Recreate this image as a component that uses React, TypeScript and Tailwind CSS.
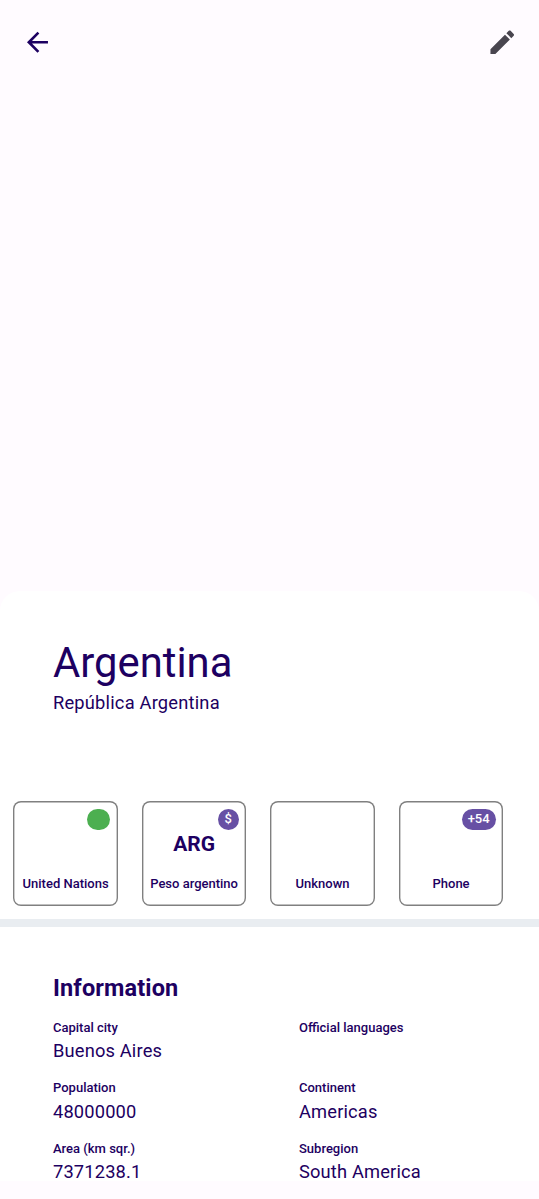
import React from "react";

const cards: { label: string; badge?: string; tone?: string; center?: string }[] = [
  { label: "United Nations", badge: "", tone: "w-[23px] bg-[#4caf50]" },
  { label: "Peso argentino", badge: "$", tone: "w-[21px] bg-[#6750a4]", center: "ARG" },
  { label: "Unknown" },
  { label: "Phone", badge: "+54", tone: "w-[34px] bg-[#6750a4]" },
];

const facts = [
  ["Capital city", "Buenos Aires"],
  ["Official languages", ""],
  ["Population", "48000000"],
  ["Continent", "Americas"],
  ["Area (km sqr.)", "7371238.1"],
  ["Subregion", "South America"],
];

export default function App() {
  return (
    <div className="flex h-[1199px] w-[539px] flex-col overflow-hidden bg-[#fffbff] font-['Roboto',sans-serif] text-[#1d0061]">
      <header className="flex h-[84px] shrink-0 items-center justify-between pr-[21px] pl-[21.6px]">
        <button aria-label="Back">
          <svg width="32" height="32" viewBox="0.2 -0.4 24.4 24.4" fill="currentColor">
            <path d="M20 11H7.83l5.59-5.59L12 4l-8 8 8 8 1.41-1.41L7.83 13H20v-2z" />
          </svg>
        </button>
        <button aria-label="Edit">
          <svg width="32" height="32" viewBox="-0.4 -0.4 24.4 24.4" fill="#49454f">
            <path d="M3 17.25V21h3.75L17.81 9.94l-3.75-3.75L3 17.25zM20.71 7.04c.39-.39.39-1.02 0-1.41l-2.34-2.34c-.39-.39-1.02-.39-1.41 0l-1.83 1.83 3.75 3.75 1.83-1.83z" />
          </svg>
        </button>
      </header>
      <main className="mt-[507px] h-[590px] shrink-0 overflow-hidden rounded-t-[20px] bg-white">
        <section className="flex h-[209.6px] flex-col pt-[46px] pl-[53px]">
          <h1 className="text-[41.8px] leading-[52px]">Argentina</h1>
          <p className="mt-px text-[18.3px] leading-[26px] tracking-[0.2px]">República Argentina</p>
        </section>
        <section className="flex h-[118.4px] gap-[23.7px] pl-[13.2px]">
          {cards.map((c) => (
            <div
              key={c.label}
              className="relative flex h-[105px] w-[104.8px] shrink-0 flex-col items-center rounded-[8px] shadow-[inset_0_0_0_1.4px_#808080]"
            >
              {c.badge !== undefined && (
                <span
                  className={`absolute top-[8px] right-[7.8px] flex h-[21px] items-center justify-center rounded-full text-[13px] font-medium text-white ${c.tone}`}
                >
                  {c.badge}
                </span>
              )}
              <div className="flex h-[89px] items-center text-[21px] font-bold">{c.center}</div>
              <div className="-mt-[15px] text-[13px] leading-[18px] font-medium whitespace-nowrap">{c.label}</div>
            </div>
          ))}
        </section>
        <div className="h-[8px] bg-[#e9edf1]" />
        <section className="pt-[45px] pl-[53px]">
          <h2 className="text-[23.5px] leading-[32px] font-bold tracking-[0.14px]">Information</h2>
          <dl className="mt-[15px] grid grid-cols-[246px_1fr]">
            {facts.map(([k, v]) => (
              <div key={k} className="h-[60.5px]">
                <dt className="text-[13px] leading-[18px] font-medium">{k}</dt>
                <dd className="mt-[1.4px] text-[18.3px] leading-[26px] tracking-[0.16px]">{v}</dd>
              </div>
            ))}
          </dl>
        </section>
      </main>
    </div>
  );
}
